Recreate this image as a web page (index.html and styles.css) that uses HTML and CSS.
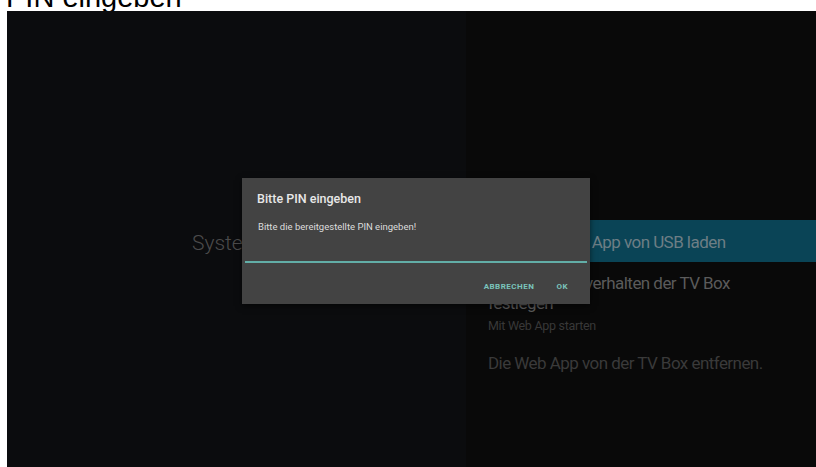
FILE: index.html
```html
<!DOCTYPE html>
<html lang="de">
<head>
<meta charset="utf-8">
<title>PIN eingeben</title>
<link rel="stylesheet" href="styles.css">
</head>
<body>
  <div class="caption"><span class="caption-text">PIN eingeben</span></div>

  <div class="screen">
    <section class="side">
      <h1 class="side-title">Systemeinstellungen</h1>
    </section>

    <section class="menu">
      <div class="menu-item is-focused">
        <span class="item-title">Ihre neue Web App von USB laden</span>
      </div>
      <div class="menu-item item-start">
        <span class="item-title">Das Autostartverhalten der TV Box festlegen</span>
        <span class="item-sub">Mit Web App starten</span>
      </div>
      <div class="menu-item item-remove">
        <span class="item-title">Die Web App von der TV Box entfernen.</span>
      </div>
    </section>

    <div class="dialog" role="dialog">
      <h2 class="dialog-title">Bitte PIN eingeben</h2>
      <p class="dialog-message">Bitte die bereitgestellte PIN eingeben!</p>
      <div class="pin-field"></div>
      <div class="dialog-actions">
        <span class="dialog-button">ABBRECHEN</span>
        <span class="dialog-button">OK</span>
      </div>
    </div>
  </div>
</body>
</html>
```

FILE: styles.css
```css
html, body {
  margin: 0;
  padding: 0;
  background: #ffffff;
  overflow: hidden;
}

/* caption line above the TV capture */
.caption {
  height: 11px;
  overflow: hidden;
  padding-left: 6px;
}

.caption-text {
  display: block;
  margin-top: -19px;
  font-family: "Liberation Sans", Arial, sans-serif;
  font-size: 29px;
  line-height: 33px;
  color: #000000;
}

/* TV screen */
.screen {
  position: relative;
  display: flex;
  margin-left: 7px;
  height: 456px;
  font-family: Roboto, "Noto Sans", sans-serif;
}

.side {
  width: 459px;
  background: #0b0c0e;
  padding: 220px 0 0 185px;
  box-sizing: border-box;
}

.side-title {
  margin: 0;
  font-size: 21px;
  font-weight: 300;
  line-height: 24px;
  color: #4b4b4b;
  white-space: nowrap;
}

.menu {
  flex: 1;
  background: #090909;
  padding-top: 209px;
}

.menu-item {
  padding: 0 40px 0 22px;
  font-size: 17px;
  line-height: 20px;
  letter-spacing: -0.55px;
}

.item-title {
  display: block;
}

.menu-item.is-focused {
  height: 42px;
  box-sizing: border-box;
  padding-top: 12px;
  background: #0a4456;
  color: #6d7e85;
  white-space: nowrap;
}

.item-start {
  padding-top: 11px;
  color: #5b5b5b;
}

.item-sub {
  display: block;
  margin-top: 4.5px;
  font-size: 12.5px;
  line-height: 16px;
  letter-spacing: -0.3px;
  color: #383838;
}

.item-remove {
  padding-top: 19.5px;
  color: #3a3a3a;
}

/* PIN dialog */
.dialog {
  position: absolute;
  left: 235px;
  top: 167px;
  width: 348px;
  height: 126px;
  box-sizing: border-box;
  padding-top: 13.4px;
  background: #434343;
  box-shadow: 0 2px 6px rgba(0, 0, 0, 0.55);
}

.dialog-title {
  margin: 0;
  padding-left: 15px;
  font-size: 12.5px;
  font-weight: 500;
  line-height: 16px;
  color: #e8e8e8;
}

.dialog-message {
  margin: 12.3px 0 0;
  padding-left: 16px;
  font-size: 9.5px;
  line-height: 13px;
  color: #dcdcdc;
}

.pin-field {
  margin: 28.3px 3px 0;
  height: 0;
  border-bottom: 2px solid #62aea7;
}

.dialog-actions {
  display: flex;
  justify-content: flex-end;
  gap: 22px;
  margin-top: 19.3px;
  padding-right: 22px;
}

.dialog-button {
  font-size: 8px;
  font-weight: 700;
  line-height: 10px;
  letter-spacing: 0.5px;
  color: #7ac4bb;
}
```
